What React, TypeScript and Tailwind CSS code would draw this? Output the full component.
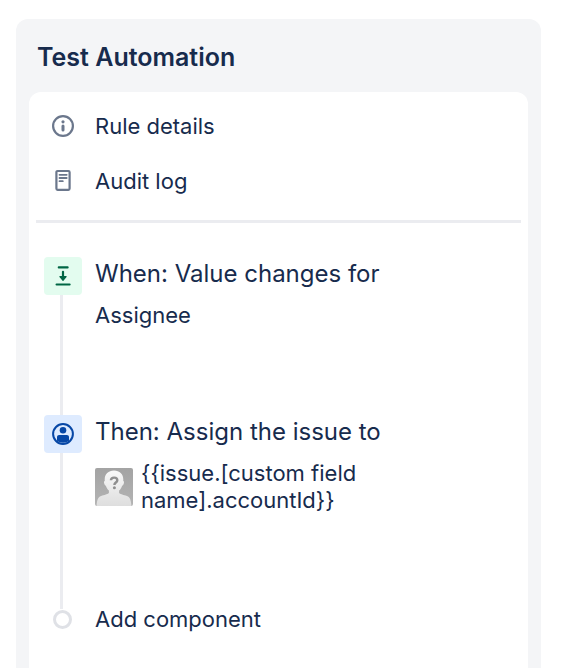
import type { ReactNode } from "react";

interface StepProps {
  icon: ReactNode;
  iconClassName: string;
  className: string;
  title: string;
  children: ReactNode;
}

function InfoIcon() {
  return (
    <svg width="24" height="24" viewBox="0 0 24 24" fill="none" aria-hidden="true">
      <circle cx="12" cy="12" r="9.9" stroke="#6B778C" strokeWidth="2.2" />
      <circle cx="12" cy="7.8" r="1.6" fill="#6B778C" />
      <path d="M12 11.9v4" stroke="#6B778C" strokeWidth="3" strokeLinecap="round" />
    </svg>
  );
}

function LogIcon() {
  return (
    <svg width="24" height="24" viewBox="0 0 24 24" fill="none" aria-hidden="true">
      <rect x="5.4" y="2" width="13.2" height="18.8" rx="1.2" stroke="#6B778C" strokeWidth="2.2" />
      <path
        d="M8.500 5.800h7.200M8.500 9h7.200M8.500 12.200h3.300"
        stroke="#6B778C"
        strokeWidth="1.8"
        strokeLinecap="round"
      />
    </svg>
  );
}

function TriggerIcon() {
  return (
    <svg width="24" height="24" viewBox="0 0 24 24" fill="none" aria-hidden="true">
      <path
        d="M7.800 3.400h8.800M5.600 20.500h13"
        stroke="#006644"
        strokeWidth="2.2"
        strokeLinecap="round"
      />
      <path d="M12 7.800v5" stroke="#006644" strokeWidth="2.2" strokeLinecap="round" />
      <path
        d="M8.900 12.600h6.200L12 16.300z"
        fill="#006644"
        stroke="#006644"
        strokeWidth="1.2"
        strokeLinejoin="round"
      />
    </svg>
  );
}

function PersonIcon() {
  return (
    <svg width="24" height="24" viewBox="0 0 24 24" fill="none" aria-hidden="true">
      <circle cx="12" cy="12" r="9.9" stroke="#0747A6" strokeWidth="2" />
      <circle cx="12" cy="8.3" r="3.3" fill="#0747A6" />
      <path
        d="M6 15c0-1.200.9-2.100 2.100-2.100h7.800c1.200 0 2.100.9 2.100 2.100v3.800c-1.600 1.300-3.700 2-6 2s-4.400-.7-6-2z"
        fill="#0747A6"
      />
    </svg>
  );
}

function Avatar() {
  return (
    <svg
      className="shrink-0 rounded-xs"
      width="38"
      height="38"
      viewBox="0 0 38 38"
      aria-hidden="true"
    >
      <defs>
        <linearGradient id="backdrop" x1="0" y1="0" x2="0" y2="1">
          <stop offset="0" stopColor="#A3A3A3" />
          <stop offset="1" stopColor="#B4B4B4" />
        </linearGradient>
        <linearGradient id="bust" x1="0" y1="0" x2="0" y2="1">
          <stop offset="0" stopColor="#F8F8F8" />
          <stop offset="1" stopColor="#DEDEDE" />
        </linearGradient>
      </defs>
      <rect width="38" height="38" fill="url(#backdrop)" />
      <path
        d="M19 2.500c5.600 0 9.300 3.600 9.300 8.900 0 .6 0 1.200-.1 1.700.9.200 1 1.200.6 2.400-.3 1.200-.9 2.100-1.700 2.200-.6 2.100-1.700 3.700-3 4.900v2.300c.8 1 3.500 1.700 6.500 2.600 3.800 1.100 5.300 2.600 5.800 10.500H1.600c.5-7.900 2-9.400 5.800-10.500 3-.9 5.700-1.600 6.500-2.600v-2.300c-1.300-1.200-2.400-2.800-3-4.900-.8-.1-1.400-1-1.700-2.200-.4-1.200-.3-2.200.6-2.400-.1-.5-.1-1.100-.1-1.700 0-5.300 3.700-8.900 9.300-8.900z"
        fill="url(#bust)"
      />
      <path
        d="M15.900 12.300c.1-1.700 1.300-2.700 3.200-2.700s3.200 1 3.200 2.600c0 2.300-2.900 2.300-2.900 4.700"
        fill="none"
        stroke="#8F8F8F"
        strokeWidth="2.4"
      />
      <circle cx="19.4" cy="19.8" r="1.5" fill="#8F8F8F" />
    </svg>
  );
}

function RuleStep({ icon, iconClassName, className, title, children }: StepProps) {
  return (
    <li className={`flex gap-[13px] ${className}`}>
      <div className="flex w-[38px] shrink-0 flex-col">
        <span
          className={`flex h-[38px] items-center justify-center rounded-sm ${iconClassName}`}
        >
          {icon}
        </span>
        <span className="ml-4 w-[3px] flex-1 bg-[#EBECF0]"></span>
      </div>
      <div className="min-w-0">
        <h2 className="text-2xl leading-[34px]">{title}</h2>
        <div className="mt-[11px] text-[22px] leading-[27px]">{children}</div>
      </div>
    </li>
  );
}

export default function App() {
  return (
    <main className="flex min-h-screen flex-col bg-white pt-[19px] pr-[25px] pl-4 font-['Inter',sans-serif] text-[#172B4D]">
      <section className="flex flex-1 flex-col rounded-t-xl bg-[#F4F5F7] px-[13px]">
        <h1 className="px-2 pt-5 pb-[17px] text-[25px] leading-9 font-semibold">
          Test Automation
        </h1>

        <div className="flex-1 rounded-t-xl bg-white px-[7px] pt-[7px]">
          <nav className="flex flex-col gap-px px-2 pb-3 text-[22px]">
            <button type="button" className="flex h-[54px] w-full items-center gap-[13px]">
              <span className="flex w-[38px] justify-center">
                <InfoIcon />
              </span>
              Rule details
            </button>
            <button type="button" className="flex h-[54px] w-full items-center gap-[13px]">
              <span className="flex w-[38px] justify-center">
                <LogIcon />
              </span>
              Audit log
            </button>
          </nav>

          <hr className="border-t-3 border-[#EBECF0]" />

          <ol className="px-2 pt-[34px]">
            <RuleStep
              icon={<TriggerIcon />}
              iconClassName="bg-[#E3FCEF]"
              className="min-h-[158px]"
              title="When: Value changes for"
            >
              Assignee
            </RuleStep>
            <RuleStep
              icon={<PersonIcon />}
              iconClassName="bg-[#DEEBFF]"
              className="min-h-[194px]"
              title="Then: Assign the issue to"
            >
              <div className="flex items-center gap-2">
                <Avatar />
                <span className="max-w-60">{"{{issue.[custom field name].accountId}}"}</span>
              </div>
            </RuleStep>
            <li>
              <button
                type="button"
                className="flex h-5 w-full items-center gap-[13px] text-[22px]"
              >
                <span className="flex w-[38px] pl-[9px]">
                  <span className="size-[19px] rounded-full border-3 border-[#DFE1E6]"></span>
                </span>
                Add component
              </button>
            </li>
          </ol>
        </div>
      </section>
    </main>
  );
}
